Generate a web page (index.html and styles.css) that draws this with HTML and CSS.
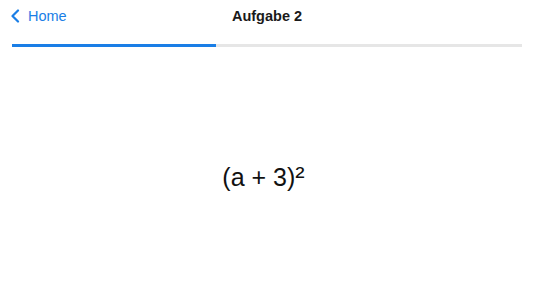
FILE: index.html
```html
<!DOCTYPE html>
<html lang="de">
<head>
<meta charset="UTF-8" />
<meta name="viewport" content="width=device-width, initial-scale=1" />
<title>Aufgabe 2</title>
<link rel="stylesheet" href="styles.css">
</head>
<body>

<div class="nav-bar">
  <a class="back-btn" href="#">
    <svg class="chevron" width="10" height="14" viewBox="0 0 10 14">
      <path d="M8 1.5 L2.5 7 L8 12.5" fill="none" stroke="#1a7ee6" stroke-width="2.2" stroke-linecap="round" stroke-linejoin="round"/>
    </svg>
    <span>Home</span>
  </a>
  <div class="nav-title">Aufgabe 2</div>
  <div></div>
</div>

<div class="progress-track">
  <div class="progress-fill" style="width: 40%"></div>
</div>

<div class="task">
  <div class="formula">(a + 3)<span class="sq">²</span></div>
</div>

</body>
</html>
```

FILE: styles.css
```css
body, html {
  margin: 0;
  padding: 0;
  height: 100%;
  background: #fff;
  font-family: "Liberation Sans", Arial, sans-serif;
  color: #111;
  overflow: hidden;
}

.nav-bar {
  display: grid;
  grid-template-columns: 1fr auto 1fr;
  align-items: center;
  height: 32px;
  padding: 0 10px;
}

.back-btn {
  display: flex;
  align-items: center;
  gap: 8px;
  color: #1a7ee6;
  text-decoration: none;
  font-size: 14.5px;
}

.nav-title {
  font-size: 14.5px;
  font-weight: 700;
  color: #1a1a1a;
  padding-left: 1px;
}

.progress-track {
  margin: 12px 11px 0 12px;
  height: 3px;
  background: #e6e6e6;
}

.progress-fill {
  height: 100%;
  background: #1a7ee6;
}

.task {
  height: 253px;
  display: flex;
  justify-content: center;
  align-items: center;
  padding-top: 8px;
  box-sizing: border-box;
}

.formula {
  font-size: 25px;
  color: #111;
  margin-right: 6px;
}

.sq {
  font-size: 1.12em;
  line-height: 0;
}
```
